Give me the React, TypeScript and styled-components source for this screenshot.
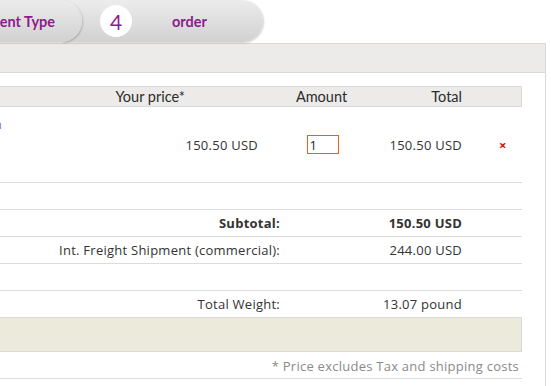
import styled, { createGlobalStyle } from "styled-components";

const GlobalStyle = createGlobalStyle`
html, body {
  margin: 0;
  padding: 0;
  background: #ffffff;
  overflow: hidden;
}
body {
  font-family: "Open Sans", "DejaVu Sans", sans-serif;
  font-size: 13px;
  letter-spacing: 0.25px;
  color: #333333;
}
`;

const Page = styled.div`
margin-left: -200px;
width: 746px;
`;

//--------------------------------------------------------------------

const TabBar = styled.div`
display: flex;
height: 42px;
margin-bottom: 1px;
`;

const Tab = styled.div<{ $w: number; $z: number; $first?: boolean }>`
position: relative;
z-index: ${(props) => props.$z};
box-sizing: border-box;
width: ${(props) => props.$w}px;
height: 42px;
margin-left: ${(props) => (props.$first ? 0 : -20)}px;
display: flex;
align-items: center;
border-radius: 0 22px 22px 0;
background: linear-gradient(#ececec, #d1d1d1);
box-shadow: 1px 1px 2px rgba(0, 0, 0, 0.18);
font-family: Lato, "DejaVu Sans", sans-serif;
font-weight: bold;
font-size: 14.5px;
letter-spacing: 0;
color: #8c1c8b;
`;

const TabLabel = styled.span<{ $pad: number }>`
padding-left: ${(props) => props.$pad}px;
`;

const StepCircle = styled.span`
margin-left: 38px;
width: 32px;
height: 32px;
border-radius: 50%;
background: #ffffff;
display: flex;
align-items: center;
justify-content: center;
font-size: 21px;
font-weight: normal;
`;

//--------------------------------------------------------------------

const Panel = styled.div`
border: 1px solid #d9d9d9;
border-bottom: none;
min-height: 400px;
`;

const PanelHead = styled.div`
height: 28px;
background: #ecebea;
border-bottom: 1px solid #d9d9d9;
`;

const Table = styled.div`
margin: 13px 23px 0 0;
`;

const Row = styled.div<{ $h: number; $line?: boolean }>`
display: grid;
grid-template-columns: 1fr 100px 85px 101px 56px;
align-items: center;
min-height: ${(props) => props.$h}px;
border-bottom: ${(props) => (props.$line ? "1px solid #dcdcdc" : "none")};
`;

const HeadRow = styled(Row)`
background: #ecebe9;
border: 1px solid #d9d9d9;
font-family: Lato, "DejaVu Sans", sans-serif;
font-weight: bold;
font-size: 14.5px;
letter-spacing: 0;
line-height: 18px;
color: #2b2b2b;
`;

const Cell = styled.div<{ $align?: string; $pr?: number; $span?: number; $bold?: boolean }>`
grid-column: span ${(props) => props.$span || 1};
text-align: ${(props) => props.$align || "left"};
padding-right: ${(props) => props.$pr || 0}px;
font-weight: ${(props) => (props.$bold ? "bold" : "normal")};
white-space: nowrap;
`;

const ItemLink = styled.a`
align-self: start;
padding: 8px 178px 0 0;
text-align: right;
color: #7b6cf0;
text-decoration: none;
`;

const AmountInput = styled.input`
display: block;
margin: 0 auto;
box-sizing: border-box;
width: 32px;
height: 19px;
padding: 0 2px;
border: 1px solid #e8601c;
font-family: "Open Sans", "DejaVu Sans", sans-serif;
font-size: 13px;
color: #222;
outline: none;
`;

const Remove = styled.span`
padding-left: 33px;
color: #cc1111;
font-weight: bold;
font-size: 13px;
`;

const Band = styled.div`
height: 33px;
background: #eceadb;
border: 1px solid #d9d9d9;
`;

const Note = styled.div`
height: 26px;
line-height: 28px;
text-align: right;
padding-right: 3px;
color: #8a8a8a;
border-bottom: 1px solid #dcdcdc;
`;

function App() {
  return (
    <Page>
      <GlobalStyle />
      <TabBar>
        <Tab $w={282} $z={2} $first>
          <TabLabel $pad={164}>Payment Type</TabLabel>
        </Tab>
        <Tab $w={201} $z={1}>
          <StepCircle>4</StepCircle>
          <TabLabel $pad={40}>order</TabLabel>
        </Tab>
      </TabBar>
      <Panel>
        <PanelHead />
        <Table>
          <HeadRow $h={19}>
            <Cell $span={2} $align="right" $pr={94}>Your price*</Cell>
            <Cell $align="center">Amount</Cell>
            <Cell $align="right" $pr={3}>Total</Cell>
            <Cell />
          </HeadRow>
          <Row $h={75} $line>
            <ItemLink href="#">Item</ItemLink>
            <Cell $align="right" $pr={22}>150.50 USD</Cell>
            <Cell>
              <AmountInput defaultValue="1" />
            </Cell>
            <Cell $align="right" $pr={4}>150.50 USD</Cell>
            <Remove>×</Remove>
          </Row>
          <Row $h={26} $line />
          <Row $h={26} $line>
            <Cell $span={2} $align="right" $bold>Subtotal:</Cell>
            <Cell />
            <Cell $align="right" $pr={4} $bold>150.50 USD</Cell>
            <Cell />
          </Row>
          <Row $h={26} $line>
            <Cell $span={2} $align="right">Int. Freight Shipment (commercial):</Cell>
            <Cell />
            <Cell $align="right" $pr={4}>244.00 USD</Cell>
            <Cell />
          </Row>
          <Row $h={26} $line />
          <Row $h={26}>
            <Cell $span={2} $align="right">Total Weight:</Cell>
            <Cell />
            <Cell $align="right" $pr={4}>13.07 pound</Cell>
            <Cell />
          </Row>
          <Band />
          <Note>* Price excludes Tax and shipping costs</Note>
        </Table>
      </Panel>
    </Page>
  );
}

export default App;
